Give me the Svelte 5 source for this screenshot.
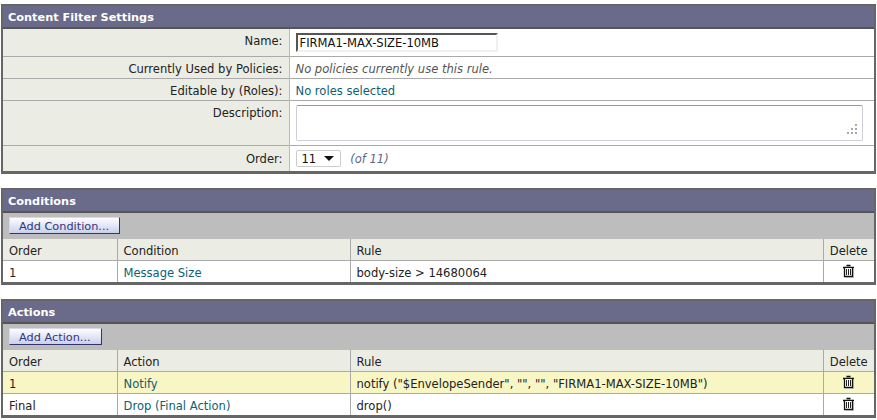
<script>
  const conditions = [
    { order: '1', name: 'Message Size', rule: 'body-size > 14680064' }
  ];
  const actions = [
    { order: '1', name: 'Notify', rule: 'notify ("$EnvelopeSender", "", "", "FIRMA1-MAX-SIZE-10MB")', hl: true },
    { order: 'Final', name: 'Drop (Final Action)', rule: 'drop()' }
  ];
</script>

{#snippet trash()}
  <svg class="trash" width="14" height="14" viewBox="0 0 14 14">
    <path d="M4.5 1.5h4M1 3.5h11" stroke="#111" stroke-width="1.5" fill="none" />
    <path d="M2.5 4v8.5h8v-8.5" stroke="#111" stroke-width="1.3" fill="#fff" />
    <path d="M4.5 5v6M6.5 5v6M8.5 5v6" stroke="#222" stroke-width="1" fill="none" />
    <path d="M11.5 5v8.5H4" stroke="#aaa" stroke-width="1" fill="none" />
  </svg>
{/snippet}

{#snippet listPanel(title, button, column, rows)}
  <section class="panel">
    <h2>{title}</h2>
    <div class="toolbar"><button class="add">{button}</button></div>
    <table class="list">
      <colgroup><col class="c1" /><col class="c2" /><col /><col class="c4" /></colgroup>
      <thead>
        <tr><th>Order</th><th>{column}</th><th>Rule</th><th class="del">Delete</th></tr>
      </thead>
      <tbody>
        {#each rows as row}
          <tr class:hl={row.hl}>
            <td>{row.order}</td>
            <td><a href="#top">{row.name}</a></td>
            <td>{row.rule}</td>
            <td class="del">{@render trash()}</td>
          </tr>
        {/each}
      </tbody>
    </table>
  </section>
{/snippet}

<div class="page">
  <section class="panel">
    <h2>Content Filter Settings</h2>
    <table class="form">
      <tbody>
        <tr class="r-name">
          <th>Name:</th>
          <td><input class="name" value="FIRMA1-MAX-SIZE-10MB" /></td>
        </tr>
        <tr class="r-text">
          <th>Currently Used by Policies:</th>
          <td><em>No policies currently use this rule.</em></td>
        </tr>
        <tr class="r-text">
          <th>Editable by (Roles):</th>
          <td><a href="#top">No roles selected</a></td>
        </tr>
        <tr class="r-desc">
          <th>Description:</th>
          <td>
            <div class="desc">
              <svg class="grip" width="11" height="11" viewBox="0 0 11 11" fill="#a8a8a8">
                <rect x="8" y="0" width="2" height="2" />
                <rect x="4" y="4" width="2" height="2" /><rect x="8" y="4" width="2" height="2" />
                <rect x="0" y="8" width="2" height="2" /><rect x="4" y="8" width="2" height="2" /><rect x="8" y="8" width="2" height="2" />
              </svg>
            </div>
          </td>
        </tr>
        <tr class="r-order">
          <th>Order:</th>
          <td>
            <span class="select">11<i class="caret"></i></span>
            <em class="of">(of 11)</em>
          </td>
        </tr>
      </tbody>
    </table>
  </section>

  {@render listPanel('Conditions', 'Add Condition...', 'Condition', conditions)}
  {@render listPanel('Actions', 'Add Action...', 'Action', actions)}
</div>

<style>
  :global(body) {
    margin: 0;
    background: #fff;
  }
  .page {
    width: 875px;
    padding: 4px 0 0 1px;
    font-family: "DejaVu Sans", Verdana, sans-serif;
    font-size: 11.55px;
    color: #222;
  }
  .panel {
    box-sizing: border-box;
    width: 875px;
    border: 2px solid #666;
    border-bottom-width: 3px;
    margin-bottom: 14px;
  }
  h2 {
    margin: 0;
    height: 21px;
    line-height: 23px;
    padding-left: 5px;
    background: #6a6a8a;
    border-bottom: 2px solid #555;
    color: #fff;
    font-size: 11.3px;
    font-weight: bold;
  }
  table {
    width: 100%;
    border-collapse: collapse;
    table-layout: fixed;
  }
  th {
    font-weight: normal;
  }
  a {
    color: #0d5f73;
    text-decoration: none;
  }
  .form th {
    width: 286px;
    padding: 0 6px 0 0;
    text-align: right;
    background: #ebece3;
    border-right: 1px solid #bbb;
    box-sizing: border-box;
    vertical-align: top;
  }
  .form td {
    padding: 0 0 0 6px;
    vertical-align: top;
  }
  .form tr + tr th,
  .form tr + tr td {
    border-top: 1px solid #aaa;
  }
  .form em {
    color: #555;
  }
  .r-name th, .r-name td { height: 27px; padding-top: 4px; box-sizing: border-box; }
  .r-name th { padding-top: 5px; line-height: 15px; }
  .r-text th, .r-text td { height: 22px; padding-top: 3px; line-height: 18px; box-sizing: border-box; }
  .r-desc th, .r-desc td { height: 45px; padding-top: 4px; box-sizing: border-box; }
  .r-desc th { line-height: 16px; }
  .r-order th, .r-order td { height: 26px; padding-top: 4px; box-sizing: border-box; }
  .r-order th { line-height: 19px; }
  .name {
    box-sizing: border-box;
    display: block;
    width: 202px;
    height: 19px;
    padding: 1px 2px;
    border: 2px solid #f0f0f0;
    border-top-color: #555;
    border-left-color: #555;
    font: 11.55px "DejaVu Sans", Verdana, sans-serif;
    color: #111;
    outline: none;
  }
  .desc {
    position: relative;
    box-sizing: border-box;
    width: 567px;
    height: 36px;
    border: 1px solid #ccd0d6;
    border-top-color: #999;
    border-radius: 2px;
  }
  .grip {
    position: absolute;
    right: 4px;
    bottom: 5px;
  }
  .select {
    display: inline-flex;
    align-items: center;
    justify-content: space-between;
    box-sizing: border-box;
    width: 45px;
    height: 17px;
    padding: 1px 5px 0;
    border: 1px solid #ccc;
    border-radius: 2px;
    color: #111;
  }
  .caret {
    width: 0;
    height: 0;
    border-left: 5px solid transparent;
    border-right: 5px solid transparent;
    border-top: 5px solid #111;
    margin-right: 1px;
  }
  .of {
    margin-left: 6px;
    color: #5a6a80 !important;
  }
  .toolbar {
    height: 26px;
    box-sizing: border-box;
    padding: 4px 0 0 6px;
    background: #bdbdbd;
  }
  .add {
    display: block;
    height: 17px;
    padding: 1px 10px 0 9px;
    border: 1px solid #33336e;
    border-top-color: #d8d8e8;
    border-left-color: #d8d8e8;
    background: linear-gradient(#fdfdff, #c9d0ec);
    color: #35357a;
    font: 11.3px "DejaVu Sans", Verdana, sans-serif;
    white-space: nowrap;
  }
  .list .c1 { width: 114px; }
  .list .c2 { width: 233px; }
  .list .c4 { width: 51px; }
  .list th,
  .list td {
    height: 22px;
    padding: 3px 6px 0;
    box-sizing: border-box;
    text-align: left;
    border-left: 1px solid #aaa;
    border-top: 1px solid #aaa;
    white-space: nowrap;
    overflow: hidden;
  }
  .list th:first-child,
  .list td:first-child {
    border-left: 0;
  }
  .list thead th {
    height: 21px;
    padding-top: 4px;
    background: #ebece3;
    border-top: 0;
  }
  .list tr.hl td {
    background: #f7f6c4;
  }
  .list .del {
    text-align: center;
    padding-left: 0;
    padding-right: 0;
  }
  .list td.del {
    padding-top: 0;
  }
  .trash {
    display: block;
    margin: 0 auto;
  }
</style>
